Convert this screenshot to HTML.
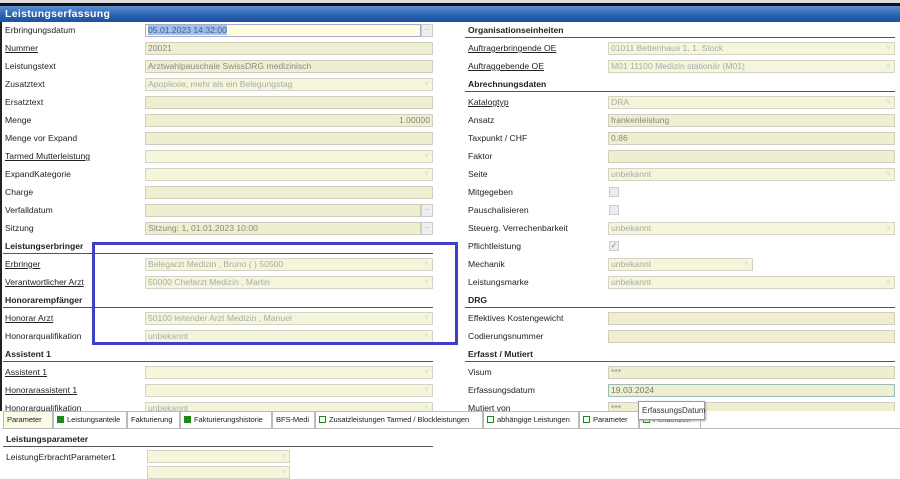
<!DOCTYPE html>
<html><head><style>
*{box-sizing:border-box;margin:0;padding:0}
body{width:900px;height:471px;overflow:hidden;background:#fff;font-family:"Liberation Sans",Arial,sans-serif;font-size:8.6px;color:#222;position:relative}
.abs{position:absolute}
.lbl{position:absolute;white-space:nowrap;line-height:12px}
.u{text-decoration:underline}
.h{font-weight:bold}
.line{position:absolute;height:1px;background:#555}
.in{position:absolute;height:13px;background:#f5f5dc;border:1px solid #d4d4c4;color:#aaa;padding-left:2px;line-height:11px;white-space:nowrap;overflow:hidden}
.in.e{background:#efefd0;border-color:#cfcfbf;color:#888}
.in.s:after{content:"v";position:absolute;right:4px;top:0;color:#ccc;font-size:6px}
.btn{position:absolute;width:12px;height:13px;background:#eee;border:1px solid #ccc;font-size:6px;color:#999;text-align:center;line-height:9px}
.cb{position:absolute;width:10px;height:10px;background:#ececec;border:1px solid #ccc}
.tab{position:absolute;top:411px;height:17px;border:1px solid #bbb;border-bottom:none;background:#fff;line-height:15px;padding-left:3px;white-space:nowrap;font-size:7.6px;letter-spacing:-0.1px;overflow:hidden}
.sq{display:inline-block;width:7px;height:7px;margin-right:3px;vertical-align:-1px}
.g{background:#1a8a1a}
.go{border:1.5px solid #1a8a1a;background:#fff}
</style></head><body>
<div class="abs" style="left:0;top:0;width:900px;height:3px;background:#ddd"></div>
<div class="abs" style="left:0;top:3px;width:900px;height:3px;background:#111"></div>
<div class="abs" style="left:0;top:6px;width:900px;height:16px;background:linear-gradient(#5b8fd0,#2860b0 60%,#1e50a0)"></div>
<div class="abs" style="left:5px;top:6px;color:#fff;font-weight:bold;font-size:10.5px;line-height:16px;letter-spacing:.3px">Leistungserfassung</div>
<div class="abs" style="left:0;top:22px;width:2px;height:449px;background:#222"></div>

<div class="lbl" style="left:5px;top:24px">Erbringungsdatum</div>
<div class="in" style="left:145px;top:24px;width:276px;background:#ffffe0;border-color:#aac;color:#557"><span style="background:#9cc3f0">05.01.2023 14:32:00</span></div><div class="btn" style="left:421px;top:24px">...</div>
<div class="lbl u" style="left:5px;top:42px">Nummer</div>
<div class="in e" style="left:145px;top:42px;width:288px">20021</div>
<div class="lbl" style="left:5px;top:60px">Leistungstext</div>
<div class="in e" style="left:145px;top:60px;width:288px">Arztwahlpauschale SwissDRG medizinisch</div>
<div class="lbl" style="left:5px;top:78px">Zusatztext</div>
<div class="in s" style="left:145px;top:78px;width:288px">Apoplexie, mehr als ein Belegungstag</div>
<div class="lbl" style="left:5px;top:96px">Ersatztext</div>
<div class="in e" style="left:145px;top:96px;width:288px"></div>
<div class="lbl" style="left:5px;top:114px">Menge</div>
<div class="in e" style="left:145px;top:114px;width:288px;text-align:right;padding-right:2px">1.00000</div>
<div class="lbl" style="left:5px;top:132px">Menge vor Expand</div>
<div class="in e" style="left:145px;top:132px;width:288px"></div>
<div class="lbl u" style="left:5px;top:150px">Tarmed Mutterleistung</div>
<div class="in s" style="left:145px;top:150px;width:288px"></div>
<div class="lbl" style="left:5px;top:168px">ExpandKategorie</div>
<div class="in s" style="left:145px;top:168px;width:288px"></div>
<div class="lbl" style="left:5px;top:186px">Charge</div>
<div class="in e" style="left:145px;top:186px;width:288px"></div>
<div class="lbl" style="left:5px;top:204px">Verfalldatum</div>
<div class="in e" style="left:145px;top:204px;width:276px"></div><div class="btn" style="left:421px;top:204px">...</div>
<div class="lbl" style="left:5px;top:222px">Sitzung</div>
<div class="in e" style="left:145px;top:222px;width:276px">Sitzung: 1, 01.01.2023 10:00</div><div class="btn" style="left:421px;top:222px">...</div>
<div class="lbl h" style="left:5px;top:240px">Leistungserbringer</div>
<div class="line" style="left:3px;top:253px;width:430px"></div>
<div class="lbl u" style="left:5px;top:258px">Erbringer</div>
<div class="in s" style="left:145px;top:258px;width:288px">Belegarzt  Medizin , Bruno  (  ) 50500</div>
<div class="lbl u" style="left:5px;top:276px">Verantwortlicher Arzt</div>
<div class="in s" style="left:145px;top:276px;width:288px">50000  Chefarzt Medizin , Martin</div>
<div class="lbl h" style="left:5px;top:294px">Honorarempfänger</div>
<div class="line" style="left:3px;top:307px;width:430px"></div>
<div class="lbl u" style="left:5px;top:312px">Honorar Arzt</div>
<div class="in s" style="left:145px;top:312px;width:288px">50100  leitender Arzt  Medizin , Manuel</div>
<div class="lbl" style="left:5px;top:330px">Honorarqualifikation</div>
<div class="in s" style="left:145px;top:330px;width:288px">unbekannt</div>
<div class="lbl h" style="left:5px;top:348px">Assistent 1</div>
<div class="line" style="left:3px;top:361px;width:430px"></div>
<div class="lbl u" style="left:5px;top:366px">Assistent 1</div>
<div class="in s" style="left:145px;top:366px;width:288px"></div>
<div class="lbl u" style="left:5px;top:384px">Honorarassistent 1</div>
<div class="in s" style="left:145px;top:384px;width:288px"></div>
<div class="lbl" style="left:5px;top:402px">Honorarqualifikation</div>
<div class="in s" style="left:145px;top:402px;width:288px">unbekannt</div>

<div class="abs" style="left:92px;top:242px;width:366px;height:103px;border:3px solid #3d3fc6"></div>

<div class="lbl h" style="left:468px;top:24px">Organisationseinheiten</div>
<div class="line" style="left:465px;top:37px;width:430px"></div>
<div class="lbl u" style="left:468px;top:42px">Auftragerbringende OE</div>
<div class="in s" style="left:608px;top:42px;width:287px">01011 Bettenhaus 1, 1. Stock</div>
<div class="lbl u" style="left:468px;top:60px">Auftraggebende OE</div>
<div class="in s" style="left:608px;top:60px;width:287px">M01 11100 Medizin stationär (M01)</div>
<div class="lbl h" style="left:468px;top:78px">Abrechnungsdaten</div>
<div class="line" style="left:465px;top:91px;width:430px"></div>
<div class="lbl u" style="left:468px;top:96px">Katalogtyp</div>
<div class="in s" style="left:608px;top:96px;width:287px">DRA</div>
<div class="lbl" style="left:468px;top:114px">Ansatz</div>
<div class="in e" style="left:608px;top:114px;width:287px">frankenleistung</div>
<div class="lbl" style="left:468px;top:132px">Taxpunkt / CHF</div>
<div class="in e" style="left:608px;top:132px;width:287px">0.86</div>
<div class="lbl" style="left:468px;top:150px">Faktor</div>
<div class="in e" style="left:608px;top:150px;width:287px"></div>
<div class="lbl" style="left:468px;top:168px">Seite</div>
<div class="in s" style="left:608px;top:168px;width:287px">unbekannt</div>
<div class="lbl" style="left:468px;top:186px">Mitgegeben</div>
<div class="cb" style="left:609px;top:187px"></div>
<div class="lbl" style="left:468px;top:204px">Pauschalisieren</div>
<div class="cb" style="left:609px;top:205px"></div>
<div class="lbl" style="left:468px;top:222px">Steuerg. Verrechenbarkeit</div>
<div class="in s" style="left:608px;top:222px;width:287px">unbekannt</div>
<div class="lbl" style="left:468px;top:240px">Pflichtleistung</div>
<div class="cb" style="left:609px;top:241px;font-size:8px;line-height:8px;color:#888;text-align:center">✓</div>
<div class="lbl" style="left:468px;top:258px">Mechanik</div>
<div class="in s" style="left:608px;top:258px;width:145px">unbekannt</div>
<div class="lbl" style="left:468px;top:276px">Leistungsmarke</div>
<div class="in s" style="left:608px;top:276px;width:287px">unbekannt</div>
<div class="lbl h" style="left:468px;top:294px">DRG</div>
<div class="line" style="left:465px;top:307px;width:430px"></div>
<div class="lbl" style="left:468px;top:312px">Effektives Kostengewicht</div>
<div class="in e" style="left:608px;top:312px;width:287px"></div>
<div class="lbl" style="left:468px;top:330px">Codierungsnummer</div>
<div class="in e" style="left:608px;top:330px;width:287px"></div>
<div class="lbl h" style="left:468px;top:348px">Erfasst / Mutiert</div>
<div class="line" style="left:465px;top:361px;width:430px"></div>
<div class="lbl" style="left:468px;top:366px">Visum</div>
<div class="in e" style="left:608px;top:366px;width:287px">***</div>
<div class="lbl" style="left:468px;top:384px">Erfassungsdatum</div>
<div class="in e" style="left:608px;top:384px;width:287px;border-color:#9bb;color:#777">19.03.2024</div>
<div class="lbl" style="left:468px;top:402px">Mutiert von</div>
<div class="in e" style="left:608px;top:402px;width:287px">***</div>

<div class="abs" style="left:0;top:411px;width:900px;height:60px;background:#fff"></div>
<div class="abs" style="left:2px;top:428px;width:898px;height:1px;background:#bbb"></div>
<div class="tab" style="left:3px;width:50px;background:#fbfbe6">Parameter</div>
<div class="tab" style="left:53px;width:74px"><span class="sq g"></span>Leistungsanteile</div>
<div class="tab" style="left:127px;width:53px">Fakturierung</div>
<div class="tab" style="left:180px;width:92px"><span class="sq g"></span>Fakturierungshistorie</div>
<div class="tab" style="left:272px;width:43px">BFS-Medi</div>
<div class="tab" style="left:315px;width:168px"><span class="sq go"></span>Zusatzleistungen Tarmed / Blockleistungen</div>
<div class="tab" style="left:483px;width:96px"><span class="sq go"></span>abhängige Leistungen</div>
<div class="tab" style="left:579px;width:60px"><span class="sq go"></span>Parameter</div>
<div class="tab" style="left:639px;width:62px"><span class="sq go"></span>Pendenzen</div>
<div class="abs" style="left:638px;top:401px;width:67px;height:19px;background:#fff;border:1px solid #999;font-size:8px;line-height:17px;padding-left:3px;color:#333;box-shadow:1px 1px 2px #aaa;white-space:nowrap">ErfassungsDatum</div>

<div class="lbl h" style="left:6px;top:433px">Leistungsparameter</div>
<div class="line" style="left:3px;top:446px;width:430px"></div>
<div class="lbl" style="left:6px;top:451px">LeistungErbrachtParameter1</div>
<div class="in s" style="left:147px;top:450px;width:143px"></div>
<div class="in s" style="left:147px;top:466px;width:143px"></div>
</body></html>
